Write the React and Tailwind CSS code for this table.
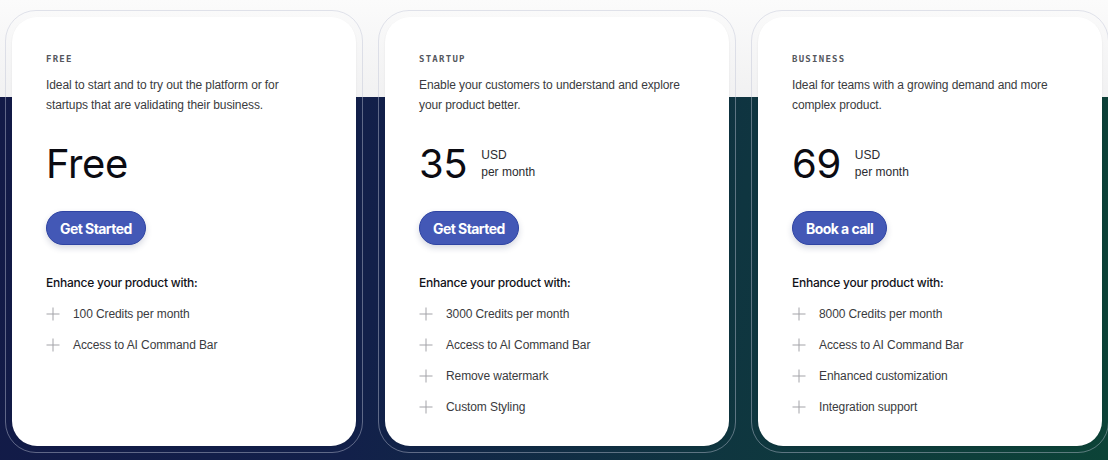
import React from "react";

const plans = [
  {
    label: "FREE",
    desc: ["Ideal to start and to try out the platform or for", "startups that are validating their business."],
    price: "Free",
    usd: false,
    cta: "Get Started",
    features: ["100 Credits per month", "Access to AI Command Bar"],
  },
  {
    label: "STARTUP",
    desc: ["Enable your customers to understand and explore", "your product better."],
    price: "35",
    usd: true,
    cta: "Get Started",
    features: ["3000 Credits per month", "Access to AI Command Bar", "Remove watermark", "Custom Styling"],
  },
  {
    label: "BUSINESS",
    desc: ["Ideal for teams with a growing demand and more", "complex product."],
    price: "69",
    usd: true,
    cta: "Book a call",
    features: ["8000 Credits per month", "Access to AI Command Bar", "Enhanced customization", "Integration support"],
  },
];

function Plus() {
  return (
    <svg width="14" height="14" viewBox="0 0 14 14" className="shrink-0">
      <path d="M7 0.5V13.5M0.5 7H13.5" stroke="#a3a3a8" strokeWidth="1" fill="none" />
    </svg>
  );
}

function Card({ p }) {
  return (
    <div className="w-[358px] shrink-0 rounded-[31px] border border-[rgba(190,196,212,0.45)] p-[6px]">
      <div className="h-[429px] rounded-[25px] bg-white pl-[34px] pt-[36px] shadow-[0_1px_2px_rgba(0,0,0,0.08)]">
        <div className="text-[9px] leading-[12px] font-bold tracking-[0.14em] text-[#55575e] font-['DejaVu_Sans_Mono',monospace]">
          {p.label}
        </div>
        <div className="mt-[10px] text-[12px] leading-[20px] tracking-[-0.1px] text-[#3a3b40] font-['Liberation_Sans',sans-serif]">
          {p.desc.map((d, i) => (
            <div key={i}>{d}</div>
          ))}
        </div>
        <div className="mt-[28px] flex items-center">
          <div className="text-[40px] leading-[42px] text-[#0b0b12] tracking-[-0.01em]">{p.price}</div>
          {p.usd && (
            <div className="ml-[14px] text-[12px] leading-[17px] text-[#2a2b30] font-['Liberation_Sans',sans-serif]">
              <div>USD</div>
              <div>per month</div>
            </div>
          )}
        </div>
        <div className="mt-[26px]">
          <button className="h-[34px] rounded-full border border-[#2f44a3] bg-[#4358b6] px-[13px] text-[14px] font-bold tracking-[-0.04em] text-white shadow-[0_3px_6px_rgba(30,40,90,0.18)]">
            {p.cta}
          </button>
        </div>
        <div className="mt-[29px] text-[12px] leading-[18px] font-medium tracking-[-0.02em] text-[#111218]">
          Enhance your product with:
        </div>
        <div className="mt-[6px] flex flex-col font-['Liberation_Sans',sans-serif]">
          {p.features.map((f) => (
            <div key={f} className="flex h-[31px] items-center gap-[13px]">
              <Plus />
              <span className="text-[12px] tracking-[-0.1px] text-[#3a3b40]">{f}</span>
            </div>
          ))}
        </div>
      </div>
    </div>
  );
}

export default function App() {
  return (
    <div className="relative h-[460px] w-[1108px] overflow-hidden font-['Inter',sans-serif]">
      <div className="absolute inset-0 flex flex-col">
        <div className="h-[97px] bg-gradient-to-b from-[#fbfbfb] to-[#f1f1f2]" />
        <div className="flex-1 bg-[linear-gradient(100deg,#121a47_0%,#12204a_35%,#0f3540_65%,#0c4337_100%)]" />
      </div>
      <div className="relative flex gap-[15px] pl-[5px] pt-[10px]">
        {plans.map((p) => (
          <Card key={p.label} p={p} />
        ))}
      </div>
    </div>
  );
}
